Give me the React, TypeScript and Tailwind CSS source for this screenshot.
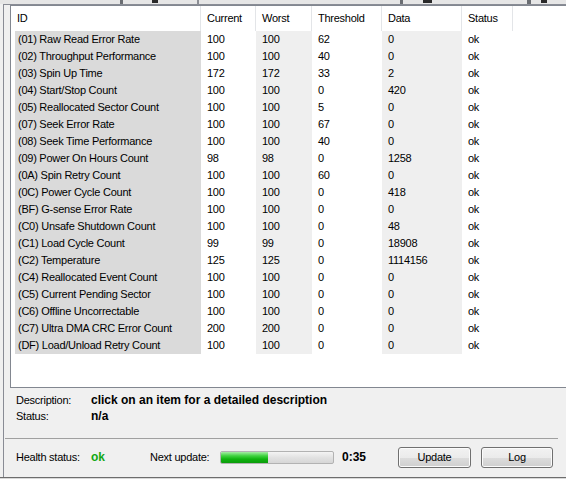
import React from "react";

type Row = [string, string, string, string, string, string];

const rows: Row[] = [
  ["(01) Raw Read Error Rate", "100", "100", "62", "0", "ok"],
  ["(02) Throughput Performance", "100", "100", "40", "0", "ok"],
  ["(03) Spin Up Time", "172", "172", "33", "2", "ok"],
  ["(04) Start/Stop Count", "100", "100", "0", "420", "ok"],
  ["(05) Reallocated Sector Count", "100", "100", "5", "0", "ok"],
  ["(07) Seek Error Rate", "100", "100", "67", "0", "ok"],
  ["(08) Seek Time Performance", "100", "100", "40", "0", "ok"],
  ["(09) Power On Hours Count", "98", "98", "0", "1258", "ok"],
  ["(0A) Spin Retry Count", "100", "100", "60", "0", "ok"],
  ["(0C) Power Cycle Count", "100", "100", "0", "418", "ok"],
  ["(BF) G-sense Error Rate", "100", "100", "0", "0", "ok"],
  ["(C0) Unsafe Shutdown Count", "100", "100", "0", "48", "ok"],
  ["(C1) Load Cycle Count", "99", "99", "0", "18908", "ok"],
  ["(C2) Temperature", "125", "125", "0", "1114156", "ok"],
  ["(C4) Reallocated Event Count", "100", "100", "0", "0", "ok"],
  ["(C5) Current Pending Sector", "100", "100", "0", "0", "ok"],
  ["(C6) Offline Uncorrectable", "100", "100", "0", "0", "ok"],
  ["(C7) Ultra DMA CRC Error Count", "200", "200", "0", "0", "ok"],
  ["(DF) Load/Unload Retry Count", "100", "100", "0", "0", "ok"],
];

function HeaderCell({ label, w }: { label: string; w: string }) {
  return (
    <div className={`${w} h-full flex items-center pl-[6px] border-r border-[#e3e5e8]`}>
      {label}
    </div>
  );
}

function WinButton({ label }: { label: string }) {
  return (
    <div className="w-full h-[21px] flex items-center justify-center rounded-[3px] border border-[#707070] bg-[linear-gradient(to_bottom,#f2f2f2_0%,#ebebeb_50%,#dddddd_50%,#cfcfcf_100%)] shadow-[inset_0_0_0_1px_#fbfbfb]">
      {label}
    </div>
  );
}

export default function App() {
  return (
    <div className="w-[566px] h-[479px] overflow-hidden bg-[#f0f0f0] text-black font-['Liberation_Sans',Arial,sans-serif] text-[11px] tracking-[-0.25px] leading-none">
      {/* tab strip (bottoms of the tabs above the page) */}
      <div className="flex h-[4px]">
        <div className="w-[120px] bg-[#e6e6e6]" />
        <div className="w-[3px] bg-[#6a6d72]" />
        <div className="w-[74px] bg-[#e6e6e6] relative">
          <div className="absolute left-[29px] top-0 w-[6px] h-[3px] bg-[#2a2a2a]" />
        </div>
        <div className="w-[2px] bg-[#8c8e94]" />
        <div className="w-[201px] bg-[#e6e6e6]" />
        <div className="w-[3px] bg-[#6a6d72]" />
        <div className="w-[124px] bg-[#e6e6e6] relative">
          <div className="absolute left-[20px] top-0 w-[9px] h-[3px] bg-[#2a2a2a]" />
        </div>
        <div className="w-[4px] bg-[#6a6d72]" />
        <div className="flex-1 bg-[#e6e6e6] relative">
          <div className="absolute left-[10px] top-0 w-[6px] h-[3px] bg-[#2a2a2a]" />
        </div>
      </div>

      {/* tab page */}
      <div className="ml-[3px] w-[580px] h-[473px] border-l border-t border-[#898c95] flex flex-col">
        {/* SMART attribute list */}
        <div className="ml-[6px] w-[570px] h-[383px] border border-[#828790] bg-white flex flex-col">
          <div className="flex h-[25px] shrink-0 bg-white">
            <HeaderCell label="ID" w="w-[190px]" />
            <HeaderCell label="Current" w="w-[55px]" />
            <HeaderCell label="Worst" w="w-[56px]" />
            <HeaderCell label="Threshold" w="w-[70px]" />
            <HeaderCell label="Data" w="w-[80px]" />
            <HeaderCell label="Status" w="w-[51px]" />
            <div className="flex-1" />
          </div>
          {rows.map((r) => (
            <div key={r[0]} className="flex h-[17px] items-stretch">
              <div className="ml-[4px] w-[186px] bg-[#dadada] pl-[3px] flex items-center whitespace-nowrap">
                {r[0]}
              </div>
              <div className="w-[55px] pl-[6px] flex items-center">{r[1]}</div>
              <div className="w-[56px] bg-[#efefef] pl-[6px] flex items-center">{r[2]}</div>
              <div className="w-[70px] pl-[6px] flex items-center">{r[3]}</div>
              <div className="w-[80px] bg-[#efefef] pl-[6px] flex items-center">{r[4]}</div>
              <div className="w-[51px] pl-[6px] flex items-center">{r[5]}</div>
            </div>
          ))}
        </div>

        {/* description of the selected attribute */}
        <div className="mt-[4px] pl-[12px] flex flex-col">
          <div className="flex h-[16px] items-center">
            <div className="w-[75px]">Description:</div>
            <div className="font-bold text-[12px] tracking-normal">
              click on an item for a detailed description
            </div>
          </div>
          <div className="flex h-[16px] items-center">
            <div className="w-[75px]">Status:</div>
            <div className="font-bold text-[12px] tracking-normal">n/a</div>
          </div>
        </div>

        <div className="mt-[14px] ml-[1px] w-[553px] h-[1px] bg-[#a0a0a0]" />

        {/* health / refresh bar */}
        <div className="mt-[8px] pl-[12px] flex h-[20px] items-center">
          <div className="w-[75px]">Health status:</div>
          <div className="w-[59px] font-bold text-[12px] tracking-normal text-[#14a814]">ok</div>
          <div className="w-[70px]">Next update:</div>
          <div className="w-[114px] h-[13px] rounded-[2px] border border-[#b2b2b2] bg-[linear-gradient(to_bottom,#f4f4f4_0%,#e2e2e2_50%,#d6d6d6_100%)] overflow-hidden">
            <div className="w-[47px] h-full bg-[linear-gradient(to_bottom,#a6eca6_0%,#3fd23f_35%,#0fb30f_65%,#0c9c0c_100%)]" />
          </div>
          <div className="ml-[8px] w-[56px] font-bold text-[12px] tracking-normal">0:35</div>
          <div className="w-[73px]">
            <WinButton label="Update" />
          </div>
          <div className="ml-[10px] w-[72px]">
            <WinButton label="Log" />
          </div>
        </div>
      </div>

      {/* bottom frame */}
      <div className="h-[1px] bg-[#6d6d6d]" />
      <div className="h-[1px] bg-[#d8d8d8]" />
    </div>
  );
}
